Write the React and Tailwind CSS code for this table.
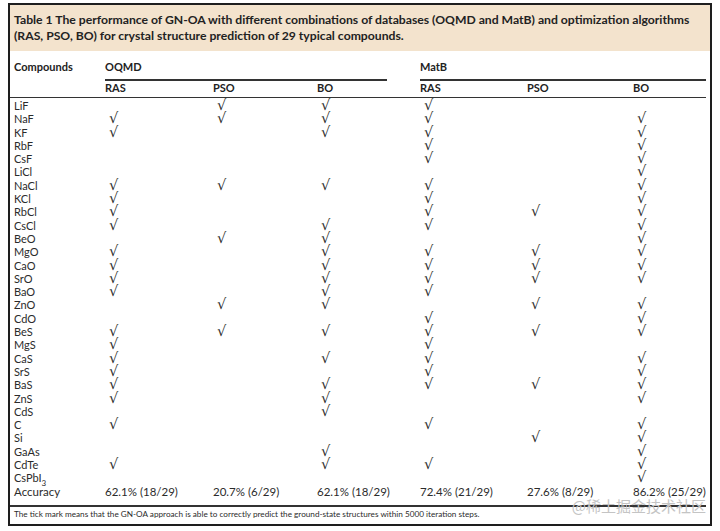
import React from 'react';

const COLS = 'grid grid-cols-[91px_108px_104px_103px_107px_106px_1fr]';

const ROWS = [
  ['LiF', [0, 1, 1, 1, 0, 0]],
  ['NaF', [1, 1, 1, 1, 0, 1]],
  ['KF', [1, 0, 1, 1, 0, 1]],
  ['RbF', [0, 0, 0, 1, 0, 1]],
  ['CsF', [0, 0, 0, 1, 0, 1]],
  ['LiCl', [0, 0, 0, 0, 0, 1]],
  ['NaCl', [1, 1, 1, 1, 0, 1]],
  ['KCl', [1, 0, 0, 1, 0, 1]],
  ['RbCl', [1, 0, 0, 1, 1, 1]],
  ['CsCl', [1, 0, 1, 1, 0, 1]],
  ['BeO', [0, 1, 1, 0, 0, 1]],
  ['MgO', [1, 0, 1, 1, 1, 1]],
  ['CaO', [1, 0, 1, 1, 1, 1]],
  ['SrO', [1, 0, 1, 1, 1, 1]],
  ['BaO', [1, 0, 1, 1, 0, 0]],
  ['ZnO', [0, 1, 1, 0, 1, 1]],
  ['CdO', [0, 0, 0, 1, 0, 1]],
  ['BeS', [1, 1, 1, 1, 1, 1]],
  ['MgS', [1, 0, 0, 1, 0, 0]],
  ['CaS', [1, 0, 1, 1, 0, 1]],
  ['SrS', [1, 0, 0, 1, 0, 1]],
  ['BaS', [1, 0, 1, 1, 1, 1]],
  ['ZnS', [1, 0, 1, 0, 0, 1]],
  ['CdS', [0, 0, 1, 0, 0, 0]],
  ['C', [1, 0, 0, 1, 0, 1]],
  ['Si', [0, 0, 0, 0, 1, 1]],
  ['GaAs', [0, 0, 1, 0, 0, 1]],
  ['CdTe', [1, 0, 1, 1, 0, 1]],
  ['CsPbI3', [0, 0, 0, 0, 0, 1]],
];

const ACCURACY = ['62.1% (18/29)', '20.7% (6/29)', '62.1% (18/29)', '72.4% (21/29)', '27.6% (8/29)', '86.2% (25/29)'];

function Name({ name }) {
  if (name === 'CsPbI3') return <span>CsPbI<sub className="text-[8px] align-[-2px]">3</sub></span>;
  return <span>{name}</span>;
}

// tick glyph sits a little high and spills into the row above, like the print
function Tick() {
  return (
    <span className="relative block h-full">
      <span className="absolute left-[4px] top-[-2px] font-['DejaVu_Sans',sans-serif] text-[14.5px] leading-[16px] text-[#2e2e2e]">√</span>
    </span>
  );
}

export default function App() {
  return (
    <div className="w-[720px] h-[531px] bg-white font-['Lato',sans-serif] text-[#2b2b2b]">
      <div className="relative ml-[8px] mt-[3px] w-[704px] h-[523px] border-2 border-[#1e1e1e] flex flex-col">
        {/* Caption */}
        <div className="bg-[#f3e3cd] h-[46px] pl-[4px] pt-[7px] text-[12.2px] leading-[16px] font-bold text-[#222]">
          Table 1 The performance of GN-OA with different combinations of databases (OQMD and MatB) and optimization algorithms (RAS, PSO, BO) for crystal structure prediction of 29 typical compounds.
        </div>

        {/* Header */}
        <div className="mr-[4px] text-[11px] font-bold text-[#222]">
          <div className={`${COLS} pl-[4px] pt-[8px] h-[28px]`}>
            <div>Compounds</div>
            <div className="col-span-3 pr-[33px]">
              <div>OQMD</div>
              <div className="mt-[3px] border-t-2 border-[#333]"></div>
            </div>
            <div className="col-span-3">
              <div>MatB</div>
              <div className="mt-[3px] border-t-2 border-[#333]"></div>
            </div>
          </div>
          <div className={`${COLS} pl-[4px] h-[19px] pt-[1px] border-b border-[#333]`}>
            <div></div>
            <div>RAS</div>
            <div>PSO</div>
            <div>BO</div>
            <div>RAS</div>
            <div>PSO</div>
            <div>BO</div>
          </div>
        </div>

        {/* Body */}
        <div className="pl-[4px] pt-[1px] text-[11px] leading-[13.3px]">
          {ROWS.map(([name, marks]) => (
            <div key={name} className={`${COLS} h-[13.3px]`}>
              <Name name={name} />
              {marks.map((m, i) => (
                <div key={i}>{m ? <Tick /> : null}</div>
              ))}
              <div></div>
            </div>
          ))}
          <div className={`${COLS} h-[13.3px] text-[11.5px]`}>
            <div>Accuracy</div>
            {ACCURACY.map((a, i) => (
              <div key={i}>{a}</div>
            ))}
            <div></div>
          </div>
        </div>

        {/* Footnote */}
        <div className="mt-[7px] mr-[4px] border-t-2 border-[#333] pl-[4px] pt-[1px] text-[8.2px] leading-[12px]">
          The tick mark means that the GN-OA approach is able to correctly predict the ground-state structures within 5000 iteration steps.
        </div>

        <div className="absolute right-[4px] bottom-[9px] font-['Noto_Sans_CJK_SC',sans-serif] text-[15px] leading-[18px] text-[#c4c4c4]">
          @稀土掘金技术社区
        </div>
      </div>
    </div>
  );
}
